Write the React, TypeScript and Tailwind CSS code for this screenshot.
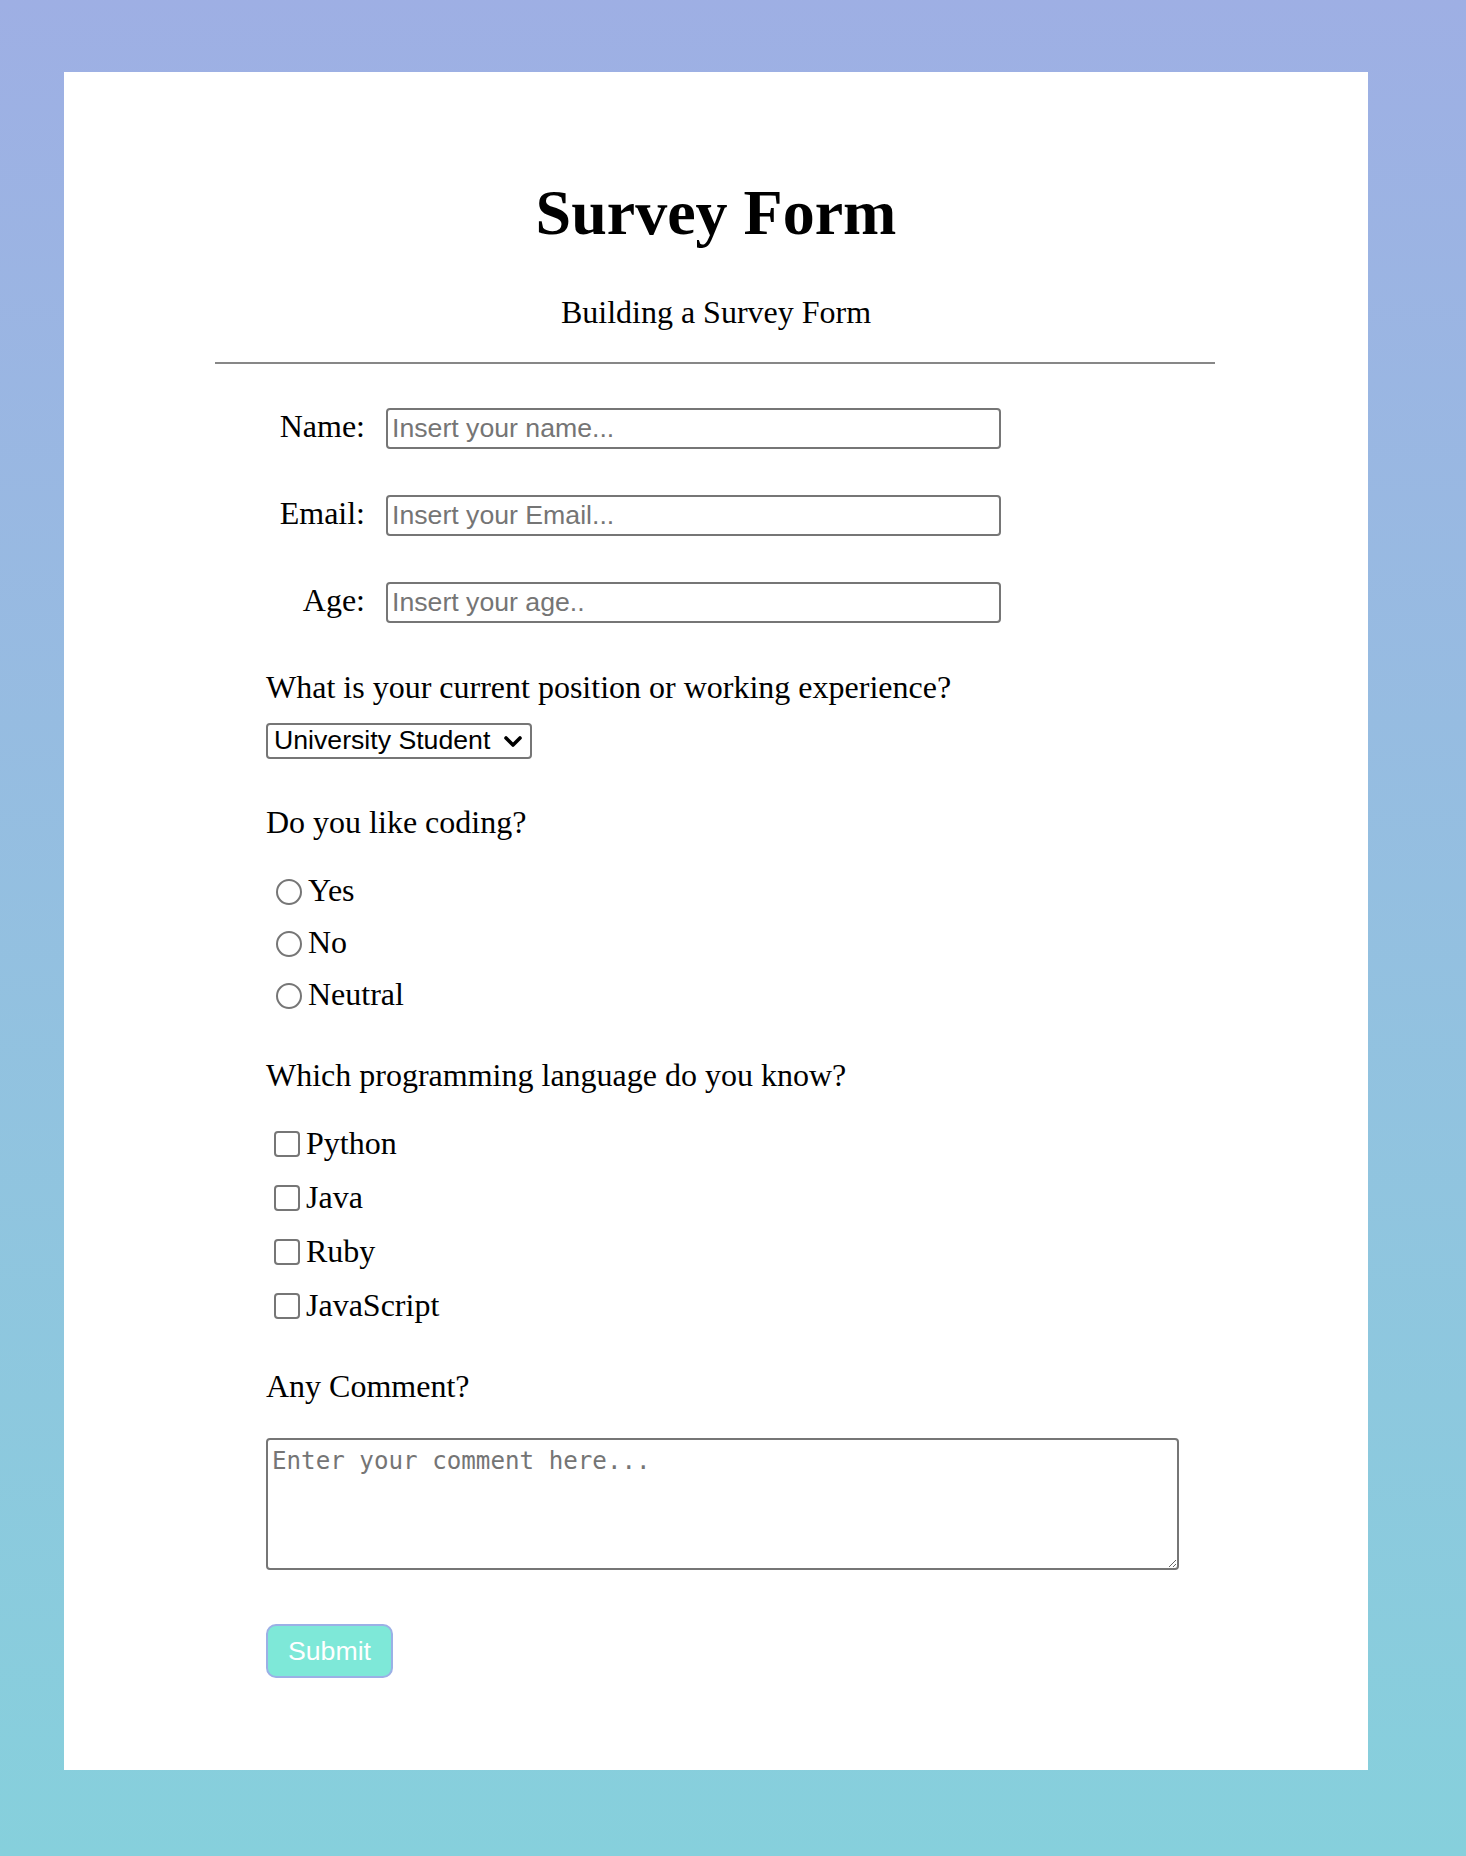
import { useState } from "react";

const labelCls = "w-[99px] shrink-0 text-right text-[32px] leading-[37px]";
const inputCls =
  "ml-[21px] h-[41px] w-[615px] rounded-[4px] border-2 border-[#767676] bg-white px-[4px] font-['Liberation_Sans',Arial,sans-serif] text-[26.67px] text-black outline-none placeholder:text-[#757575]";

export default function App() {
  const [role, setRole] = useState("student");

  return (
    <div className="h-[1856px] w-full bg-linear-to-b from-[#9eafe4] to-[#86d0dc] pt-[72px]">
      <div className="ml-[64px] h-[1698px] w-[1304px] bg-white pt-[104px] font-['Liberation_Serif','Times_New_Roman',serif] text-black">
        <h1 className="text-center text-[64px] font-bold leading-[74px]">Survey Form</h1>
        <p className="mt-[44px] text-center text-[32px] leading-[37px]">Building a Survey Form</p>
        <div className="ml-[151px] mt-[31px] h-[2px] w-[1000px] bg-[#878787]" />

        <form className="pl-[202px]" onSubmit={(e) => e.preventDefault()}>
          <div className="mt-[44px] flex items-start">
            <label htmlFor="name" className={labelCls}>Name:</label>
            <input id="name" type="text" placeholder="Insert your name..." className={inputCls} />
          </div>
          <div className="mt-[46px] flex items-start">
            <label htmlFor="email" className={labelCls}>Email:</label>
            <input id="email" type="email" placeholder="Insert your Email..." className={inputCls} />
          </div>
          <div className="mt-[46px] flex items-start">
            <label htmlFor="age" className={labelCls}>Age:</label>
            <input id="age" type="text" placeholder="Insert your age.." className={inputCls} />
          </div>

          <p className="mt-[46px] text-[32px] leading-[37px]">What is your current position or working experience?</p>
          <div className="relative mt-[17px] h-[36px] w-[266px]">
            <select
              value={role}
              onChange={(e) => setRole(e.target.value)}
              className="block h-[36px] w-[266px] appearance-none rounded-[4px] border-2 border-[#767676] bg-white pb-[2px] pl-[6px] pt-0 font-['Liberation_Sans',Arial,sans-serif] text-[26.67px] leading-[28px] text-black outline-none"
            >
              <option value="student">University Student</option>
              <option value="fulltime">Full Time Job</option>
              <option value="freelance">Freelancer</option>
              <option value="other">Other</option>
            </select>
            <svg
              className="pointer-events-none absolute right-[9px] top-[12px] h-[13px] w-[20px]"
              viewBox="0 0 20 13"
              fill="none"
              stroke="black"
              strokeWidth={3.6}
              strokeLinecap="round"
              strokeLinejoin="round"
            >
              <polyline points="3,3 10,10 17,3" />
            </svg>
          </div>

          <p className="mt-[45px] text-[32px] leading-[37px]">Do you like coding?</p>
          <div className="mt-[23px]">
            {["Yes", "No", "Neutral"].map((opt) => (
              <div key={opt} className="flex h-[52px] items-center">
                <input
                  id={opt}
                  type="radio"
                  name="coding"
                  className="ml-[10px] mr-[6px] mt-[3px] h-[26px] w-[26px] shrink-0 appearance-none rounded-full border-2 border-[#767676] bg-white checked:border-[7px] checked:border-[#0075ff]"
                />
                <label htmlFor={opt} className="text-[32px] leading-[37px]">{opt}</label>
              </div>
            ))}
          </div>

          <p className="mt-[37px] text-[32px] leading-[37px]">Which programming language do you know?</p>
          <div className="mt-[22px]">
            {["Python", "Java", "Ruby", "JavaScript"].map((lang) => (
              <div key={lang} className="flex h-[54px] items-center">
                <input
                  id={lang}
                  type="checkbox"
                  className="ml-[8px] mr-[6px] mt-[1px] h-[26px] w-[26px] shrink-0 appearance-none rounded-[4px] border-2 border-[#767676] bg-white checked:border-[#0075ff] checked:bg-[#0075ff]"
                />
                <label htmlFor={lang} className="text-[32px] leading-[37px]">{lang}</label>
              </div>
            ))}
          </div>

          <p className="mt-[36px] text-[32px] leading-[37px]">Any Comment?</p>
          <textarea
            placeholder="Enter your comment here..."
            className="mt-[33px] block h-[132px] w-[913px] rounded-[4px] border-2 border-[#767676] px-[4px] pt-[3px] font-['DejaVu_Sans_Mono',monospace] text-[24.2px] text-black outline-none placeholder:text-[#757575]"
          />

          <button
            type="submit"
            className="mt-[54px] block h-[54px] w-[127px] rounded-[10px] border-2 border-[#9bb0e6] bg-[#7ee8d8] font-['Liberation_Sans',Arial,sans-serif] text-[26.67px] text-white"
          >
            Submit
          </button>
        </form>
      </div>
    </div>
  );
}
